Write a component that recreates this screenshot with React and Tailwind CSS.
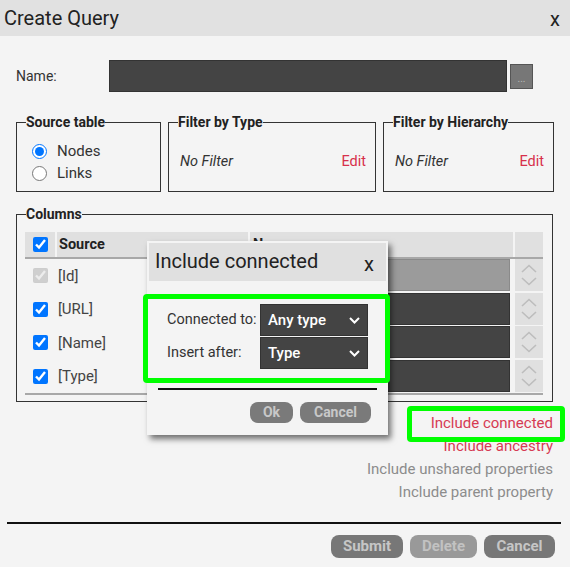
import React from 'react';

const rows = [
  { label: '[Id]', disabled: true },
  { label: '[URL]' },
  { label: '[Name]' },
  { label: '[Type]' },
];

const links = [
  { text: 'Include connected', active: true },
  { text: 'Include ancestry', active: true },
  { text: 'Include unshared properties' },
  { text: 'Include parent property' },
];

function Chevron({ className }) {
  return (
    <svg width="11" height="7" viewBox="0 0 11 7" className={className}>
      <polyline points="1,1 5.5,5.5 10,1" fill="none" stroke="currentColor" strokeWidth="2" />
    </svg>
  );
}

function Spinner() {
  return (
    <svg width="28" height="32" viewBox="0 0 28 32" className="text-[#bdbdbd]">
      <polyline points="7,13 14,6.5 21,13" fill="none" stroke="currentColor" strokeWidth="1.6" />
      <polyline points="7,19 14,25.5 21,19" fill="none" stroke="currentColor" strokeWidth="1.6" />
    </svg>
  );
}

function Select({ value }) {
  return (
    <div className="w-[108px] h-[32px] bg-[#444] border border-[#333] flex items-center justify-between pl-[7px] pr-[7px] text-white text-[15px] font-medium">
      <span>{value}</span>
      <Chevron />
    </div>
  );
}

function IncludeConnected() {
  return (
    <div className="absolute left-[147px] top-[241px] w-[241px] h-[194px] bg-[#f4f4f4] shadow-[3px_4px_6px_rgba(0,0,0,0.55)]">
      <div className="mx-[2px] mt-[2px] h-[38px] bg-[#e0e0e0] flex items-center justify-between pl-[6px] pr-[12px]">
        <span className="text-[20px] text-[#222] -mt-[3px]">Include connected</span>
        <span className="text-[20px] text-[#222] mt-[3px]">x</span>
      </div>
      <div className="pt-[23px] pl-[20px] flex flex-col gap-[1px] text-[14.5px] text-[#333]">
        <div className="flex items-center">
          <span className="w-[93px]">Connected to:</span>
          <Select value="Any type" />
        </div>
        <div className="flex items-center">
          <span className="w-[93px]">Insert after:</span>
          <Select value="Type" />
        </div>
      </div>
      <div className="mx-[11px] mt-[19px] h-[1.5px] bg-[#111]" />
      <div className="mt-[12px] pr-[17px] flex justify-end gap-[7px]">
        <button className="w-[43px] h-[21px] rounded-[8px] bg-[#7a7a7a] text-[#c8c8c8] text-[14px] font-bold leading-none">Ok</button>
        <button className="w-[71px] h-[21px] rounded-[8px] bg-[#7a7a7a] text-[#c8c8c8] text-[14px] font-bold leading-none">Cancel</button>
      </div>
      <div className="absolute left-[-4px] top-[53px] w-[247px] h-[89px] border-[5px] border-[#00ff00] rounded-[4px]" />
    </div>
  );
}

export default function App() {
  return (
    <div className="relative w-[570px] h-[567px] bg-[#f4f4f4] overflow-hidden font-['Roboto',sans-serif] text-[#333]">
      <div className="h-[36px] bg-[#e1e1e1] flex items-center justify-between pl-[4px] pr-[10px]">
        <span className="text-[20px] text-[#222] -mt-[1px]">Create Query</span>
        <span className="text-[20px] text-[#222] mt-[2px]">x</span>
      </div>

      <div className="mt-[24px] flex items-center">
        <span className="w-[109px] pl-[16px] text-[14px]">Name:</span>
        <input className="w-[398px] h-[32px] bg-[#444] border border-[#333] outline-none" />
        <button className="ml-[3px] w-[23px] h-[25px] bg-[#777] border border-[#555] text-[#bbb] text-[10px] leading-none pt-[6px]">...</button>
      </div>

      <div className="mt-[22px] flex pl-[16px]">
        <fieldset className="w-[145px] h-[78px] border border-[#333]">
          <legend className="ml-[9px] text-[14px] leading-[16px] font-bold text-[#222]">Source table</legend>
          <div className="pt-[10px] pl-[15px] text-[15px]">
            <label className="h-[22px] flex items-center gap-[10px]">
              <input type="radio" name="src" defaultChecked className="w-[15px] h-[15px] m-0 accent-[#0075ff]" />
              Nodes
            </label>
            <label className="h-[22px] flex items-center gap-[10px]">
              <input type="radio" name="src" className="w-[15px] h-[15px] m-0 accent-[#0075ff]" />
              Links
            </label>
          </div>
        </fieldset>
        <fieldset className="ml-[7px] w-[208px] h-[78px] border border-[#333]">
          <legend className="ml-[9px] text-[14px] leading-[16px] font-bold text-[#222]">Filter by Type</legend>
          <div className="h-[61px] pt-[3px] flex items-center justify-between pl-[11px] pr-[9px] text-[14.5px]">
            <span className="italic">No Filter</span>
            <span className="text-[#d7304b]">Edit</span>
          </div>
        </fieldset>
        <fieldset className="ml-[7px] w-[171px] h-[78px] border border-[#333]">
          <legend className="ml-[9px] text-[14px] leading-[16px] font-bold text-[#222]">Filter by Hierarchy</legend>
          <div className="h-[61px] pt-[3px] flex items-center justify-between pl-[11px] pr-[9px] text-[14.5px]">
            <span className="italic">No Filter</span>
            <span className="text-[#d7304b]">Edit</span>
          </div>
        </fieldset>
      </div>

      <fieldset className="mt-[14px] ml-[16px] w-[537px] h-[196px] border border-[#333]">
        <legend className="ml-[9px] text-[14px] leading-[16px] font-bold text-[#222]">Columns</legend>
        <div className="pt-[10px] pl-[8px] pr-[9px]">
          <div className="grid grid-cols-[30px_191px_263px_28px] gap-x-[2px] h-[27px] border-b-2 border-[#a8a8a8]">
            <div className="bg-[#e0e0e0] flex items-center justify-center">
              <input type="checkbox" defaultChecked className="w-[15px] h-[15px] m-0 accent-[#0075ff]" />
            </div>
            <div className="bg-[#e0e0e0] flex items-center pl-[2px] text-[14.5px] font-bold text-[#222]">Source</div>
            <div className="bg-[#e0e0e0] flex items-center pl-[3px] text-[14.5px] font-bold text-[#222]">Name</div>
            <div className="bg-[#e0e0e0]" />
          </div>
          {rows.map((r) => (
            <div key={r.label} className="grid grid-cols-[30px_191px_263px_28px] gap-x-[2px] h-[33.5px]">
              <div className="flex items-center justify-center">
                <input
                  type="checkbox"
                  defaultChecked
                  disabled={r.disabled}
                  className="w-[15px] h-[15px] m-0 accent-[#0075ff]"
                />
              </div>
              <div className="flex items-center pl-[1px] text-[15px] text-[#444]">{r.label}</div>
              <div className="pr-[3px] pb-[1.5px]">
                <div className={`h-full border ${r.disabled ? 'bg-[#9b9b9b] border-[#8a8a8a]' : 'bg-[#444] border-[#333]'}`} />
              </div>
              <div className="pb-[1.5px]">
                <div className="h-full bg-[#e0e0e0] flex items-center justify-center">
                  <Spinner />
                </div>
              </div>
            </div>
          ))}
          <div className="h-[2px] bg-[#a8a8a8]" />
        </div>
      </fieldset>

      <div className="mt-[10px] pr-[17px] flex flex-col items-end text-[15px] leading-[23px]">
        {links.map((l) => (
          <span key={l.text} className={l.active ? 'text-[#d63a52]' : 'text-[#8c8c8c]'}>
            {l.text}
          </span>
        ))}
      </div>

      <div className="mt-[18px] ml-[7px] mr-[9px] h-[1.5px] bg-[#111]" />

      <div className="mt-[11px] pr-[15px] flex justify-end gap-[7px]">
        <button className="w-[72px] h-[23px] rounded-[8px] bg-[#777] text-[#c6c6c6] text-[15px] font-bold leading-none">Submit</button>
        <button className="w-[67px] h-[23px] rounded-[8px] bg-[#999] text-[#c2c2c2] text-[15px] font-bold leading-none">Delete</button>
        <button className="w-[71px] h-[23px] rounded-[8px] bg-[#777] text-[#c6c6c6] text-[15px] font-bold leading-none">Cancel</button>
      </div>

      <IncludeConnected />
      <div className="absolute left-[407px] top-[406px] w-[158px] h-[36px] border-[5px] border-[#00ff00] rounded-[4px]" />
    </div>
  );
}
